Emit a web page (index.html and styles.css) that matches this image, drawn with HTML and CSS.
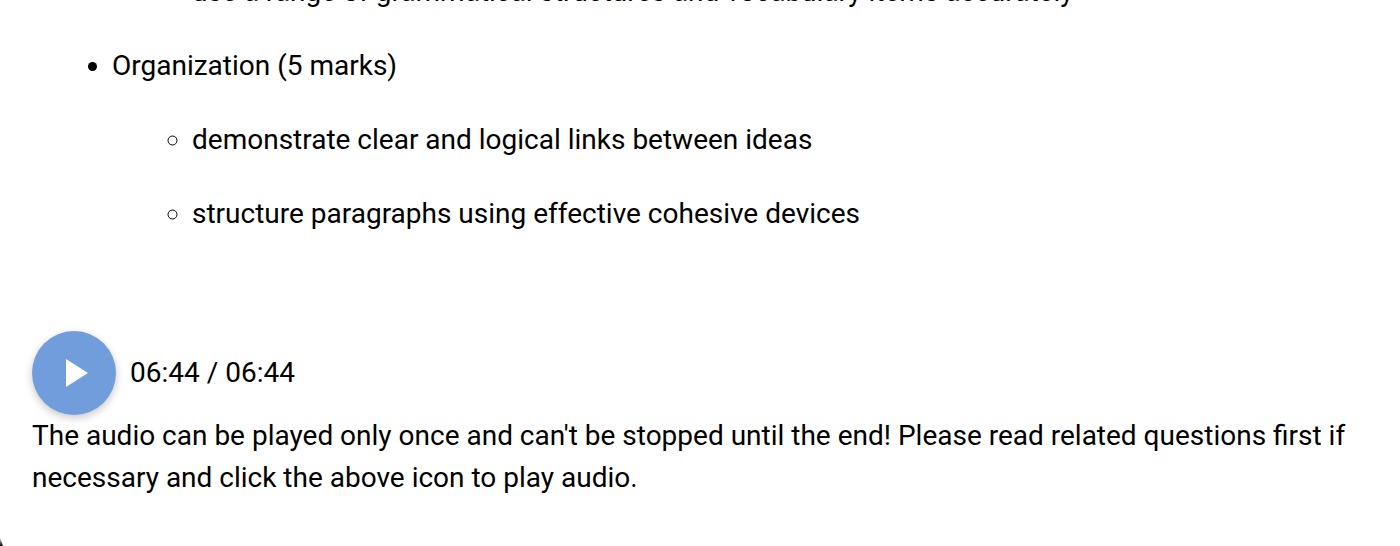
FILE: index.html
```html
<!DOCTYPE html>
<html lang="en">
<head>
<meta charset="utf-8">
<title>Audio question</title>
<link rel="stylesheet" href="styles.css">
</head>
<body>
<main class="content">
  <ul class="outer">
    <li class="hidden-parent">
      <ul class="inner">
        <li>use a range of grammatical structures and vocabulary items accurately</li>
      </ul>
    </li>
    <li>Organization (5 marks)
      <ul class="inner">
        <li>demonstrate clear and logical links between ideas</li>
        <li>structure paragraphs using effective cohesive devices</li>
      </ul>
    </li>
  </ul>
  <div class="player">
    <button class="play" type="button" aria-label="Play">
      <svg class="play-icon" width="22" height="28" viewBox="0 0 22 28"><path d="M0 0L22 14L0 28Z" fill="#fff"/></svg>
    </button>
    <span class="time">06:44 / 06:44</span>
  </div>
  <p class="note">The audio can be played only once and can't be stopped until the end! Please read related questions first if necessary and click the above icon to play audio.</p>
</main>
<div class="corner"></div>
</body>
</html>
```
FILE: styles.css
```css
html, body {
  margin: 0;
  height: 100%;
  overflow: hidden;
  background: #fff;
}
body {
  font-family: Roboto, "Liberation Sans", sans-serif;
  font-size: 28px;
  line-height: 42px;
  color: #000;
}
.content {
  margin-top: -29px;
  padding: 0 32px;
}
.outer, .inner {
  list-style-position: outside;
  margin: 0;
  padding-left: 80px;
}
.outer { list-style-type: disc; }
.inner { list-style-type: circle; }
.outer > li { margin-bottom: 32px; }
.inner > li { margin-top: 32px; }
.hidden-parent { list-style-type: none; }
.hidden-parent > .inner > li { margin-top: 0; }
.player {
  display: flex;
  align-items: center;
  gap: 14px;
  margin-top: 96px;
}
.play {
  display: flex;
  align-items: center;
  justify-content: center;
  width: 84px;
  height: 84px;
  padding: 0;
  border: 0;
  border-radius: 50%;
  background: #729ddd;
  box-shadow: 0 3px 8px rgba(0, 0, 0, 0.22);
}
.play-icon { margin-left: 6px; }
.note { margin: 0; }
.corner {
  position: fixed;
  left: 0;
  bottom: 0;
  width: 3px;
  height: 9px;
  background: linear-gradient(to bottom, transparent, #000);
  clip-path: polygon(0 0, 100% 100%, 0 100%);
}
```
